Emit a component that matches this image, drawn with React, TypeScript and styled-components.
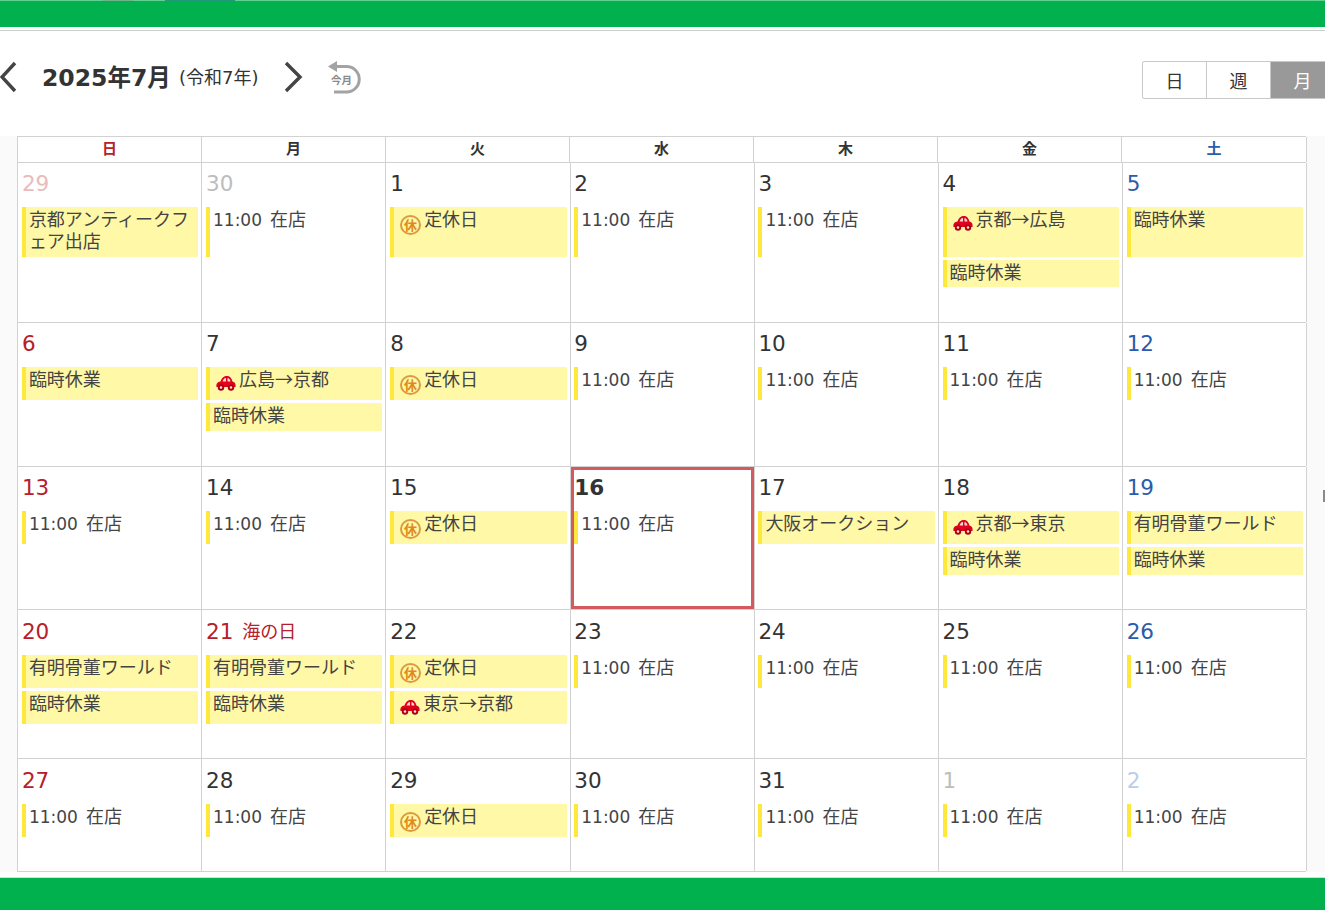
import React from "react";
import styled, { createGlobalStyle } from "styled-components";

type Tone = "normal" | "sun" | "sat" | "mutedSun" | "muted" | "mutedSat";
type Ev = { text: string; icon?: "car" | "off"; plain?: boolean; h?: number };
type Day = { d: number; tone?: Tone; today?: boolean; holiday?: string; events: Ev[] };

const zaiten: Ev = { text: "11:00 在店", plain: true, h: 33 };
const off = (h = 33): Ev => ({ text: "定休日", icon: "off", h });
const rinji = (h = 28): Ev => ({ text: "臨時休業", h });
const ariake: Ev = { text: "有明骨董ワールド", h: 33 };

const weeks: { height: number; pad: number; days: Day[] }[] = [
  {
    height: 160,
    pad: 6,
    days: [
      { d: 29, tone: "mutedSun", events: [{ text: "京都アンティークフェア出店", h: 50 }] },
      { d: 30, tone: "muted", events: [{ ...zaiten, h: 50 }] },
      { d: 1, events: [off(50)] },
      { d: 2, events: [{ ...zaiten, h: 50 }] },
      { d: 3, events: [{ ...zaiten, h: 50 }] },
      { d: 4, events: [{ text: "京都→広島", icon: "car", h: 50 }, rinji(27)] },
      { d: 5, tone: "sat", events: [{ text: "臨時休業", h: 50 }] },
    ],
  },
  {
    height: 144,
    pad: 6,
    days: [
      { d: 6, tone: "sun", events: [{ text: "臨時休業", h: 33 }] },
      { d: 7, events: [{ text: "広島→京都", icon: "car", h: 33 }, rinji()] },
      { d: 8, events: [off()] },
      { d: 9, events: [zaiten] },
      { d: 10, events: [zaiten] },
      { d: 11, events: [zaiten] },
      { d: 12, tone: "sat", events: [zaiten] },
    ],
  },
  {
    height: 143,
    pad: 6,
    days: [
      { d: 13, tone: "sun", events: [zaiten] },
      { d: 14, events: [zaiten] },
      { d: 15, events: [off()] },
      { d: 16, today: true, events: [zaiten] },
      { d: 17, events: [{ text: "大阪オークション", h: 33 }] },
      { d: 18, events: [{ text: "京都→東京", icon: "car", h: 33 }, rinji()] },
      { d: 19, tone: "sat", events: [ariake, rinji()] },
    ],
  },
  {
    height: 149,
    pad: 7,
    days: [
      { d: 20, tone: "sun", events: [ariake, rinji(33)] },
      { d: 21, tone: "sun", holiday: "海の日", events: [ariake, rinji(33)] },
      { d: 22, events: [off(), { text: "東京→京都", icon: "car", h: 33 }] },
      { d: 23, events: [zaiten] },
      { d: 24, events: [zaiten] },
      { d: 25, events: [zaiten] },
      { d: 26, tone: "sat", events: [zaiten] },
    ],
  },
  {
    height: 113,
    pad: 7,
    days: [
      { d: 27, tone: "sun", events: [zaiten] },
      { d: 28, events: [zaiten] },
      { d: 29, events: [off()] },
      { d: 30, events: [zaiten] },
      { d: 31, events: [zaiten] },
      { d: 1, tone: "muted", events: [zaiten] },
      { d: 2, tone: "mutedSat", events: [zaiten] },
    ],
  },
];

const toneColor: Record<Tone, string> = {
  normal: "#333333",
  sun: "#b5202a",
  sat: "#2a5caa",
  mutedSun: "#e8bcbc",
  muted: "#bdbdbd",
  mutedSat: "#bccde6",
};

const headers: { label: string; tone?: Tone }[] = [
  { label: "日", tone: "sun" },
  { label: "月" },
  { label: "火" },
  { label: "水" },
  { label: "木" },
  { label: "金" },
  { label: "土", tone: "sat" },
];

const Global = createGlobalStyle`
  html, body { margin: 0; padding: 0; background: #fff; overflow: hidden; }
  body { font-family: "DejaVu Sans", "Noto Sans CJK JP", sans-serif; color: #333; }
`;

const Page = styled.div`
  position: relative;
  width: 1325px;
  height: 910px;
  display: flex;
  flex-direction: column;
  overflow: hidden;
`;

const TopBar = styled.div`
  height: 27px;
  flex: none;
  background: #00b14d;
  border-top: 1px solid #5fd08f;
  box-sizing: border-box;
  display: flex;
  align-items: flex-start;
  padding-left: 103px;
`;

const ClippedNav = styled.span<{ $w: number; $c: string }>`
  width: ${(p) => p.$w}px;
  height: 1px;
  margin-top: -1px;
  margin-right: 32px;
  background: ${(p) => p.$c};
`;

const Toolbar = styled.header`
  height: 106px;
  margin-top: 3px;
  flex: none;
  box-sizing: border-box;
  border-top: 1px solid #c9d0cc;
  display: flex;
  align-items: flex-start;
  padding-top: 29px;
`;

const NavButton = styled.button`
  border: 0;
  background: none;
  padding: 0;
  width: 22px;
  height: 34px;
  display: flex;
  color: #444;
`;

const MonthTitle = styled.h1`
  margin: 1px 0 0 20px;
  font-size: 23.5px;
  line-height: 34px;
  font-weight: 700;
  color: #333;
  width: 129px;
  white-space: nowrap;
`;

const Era = styled.span`
  margin: 1px 0 0 8px;
  width: 103px;
  font-size: 18px;
  line-height: 34px;
  white-space: nowrap;
`;

const TodayIcon = styled.div`
  margin-left: 24px;
  width: 34px;
  height: 34px;
`;

const Views = styled.div`
  margin-left: auto;
  margin-top: 1px;
  margin-right: -9px;
  display: flex;
  height: 38px;
  box-sizing: border-box;
  border: 1px solid #c8c8c8;
  border-right: 0;
  border-radius: 3px 0 0 3px;
  overflow: hidden;
`;

const View = styled.div<{ $active?: boolean }>`
  width: 64px;
  box-sizing: border-box;
  display: flex;
  align-items: center;
  justify-content: center;
  font-size: 18px;
  font-family: "Noto Sans CJK JP", sans-serif;
  background: ${(p) => (p.$active ? "#999" : "#fff")};
  color: ${(p) => (p.$active ? "#fff" : "#333")};
  &:first-child { width: 63px; }
  & + & { border-left: 1px solid #c8c8c8; }
`;

const CalendarArea = styled.main`
  flex: none;
  height: 736px;
  padding-left: 17px;
  background: #fafafa;
`;

const Calendar = styled.div`
  width: 1290px;
  background: #fff;
  border-left: 1px solid #d2d2d2;
  border-right: 1px solid #fafafa;
  box-sizing: border-box;
`;

const HeadRow = styled.div`
  display: grid;
  grid-template-columns: repeat(6, 184px) 185px;
  height: 27px;
  box-sizing: border-box;
  border-top: 1px solid #d2d2d2;
  border-bottom: 1px solid #d2d2d2;
`;

const HeadCell = styled.div<{ $tone: Tone }>`
  display: flex;
  align-items: center;
  justify-content: center;
  box-sizing: border-box;
  padding: 0 0 4px;
  border-right: 1px solid #d2d2d2;
  font-size: 15px;
  font-weight: 700;
  font-family: "Noto Sans CJK JP", sans-serif;
  color: ${(p) => toneColor[p.$tone]};
`;

const Week = styled.div<{ $h: number }>`
  display: grid;
  grid-template-columns: repeat(7, 184.14px);
  height: ${(p) => p.$h}px;
  box-sizing: border-box;
  margin-left: 0.2px;
  border-bottom: 1px solid #d2d2d2;
`;

const Cell = styled.div<{ $today?: boolean; $pad: number }>`
  position: relative;
  box-sizing: border-box;
  padding: ${(p) => p.$pad}px 3px 0 3.7px;
  border-right: 1px solid #d2d2d2;
  ${(p) =>
    p.$today &&
    `&::after {
      content: "";
      position: absolute;
      inset: 0;
      border: 3px solid #d35a5f;
    }`}
`;

const DateLine = styled.div`
  height: 38px;
  display: flex;
  align-items: flex-start;
`;

const DateNum = styled.span<{ $tone: Tone; $today?: boolean }>`
  font-size: 21.5px;
  line-height: 30px;
  font-family: "DejaVu Sans", sans-serif;
  font-weight: ${(p) => (p.$today ? 700 : 400)};
  color: ${(p) => toneColor[p.$tone]};
`;

const Holiday = styled.span`
  margin-left: 9px;
  font-size: 18px;
  line-height: 27px;
  font-family: "Noto Sans CJK JP", sans-serif;
  color: #b5202a;
`;

const EventBox = styled.div<{ $h: number; $plain?: boolean }>`
  height: ${(p) => p.$h}px;
  box-sizing: border-box;
  margin-bottom: 3px;
  padding: 0 3px;
  border-left: 4px solid #ffe83c;
  background: ${(p) => (p.$plain ? "transparent" : "#fff8a6")};
  font-size: 18px;
  line-height: 22px;
  font-family: "Noto Sans CJK JP", sans-serif;
  color: #444;
`;

const EventIcon = styled.svg`
  vertical-align: -5px;
  margin: 0 3px 0 3px;
`;

const Time = styled.span`
  font-family: "DejaVu Sans", sans-serif;
  font-size: 17px;
  margin-right: 4px;
`;

const Gap = styled.div`
  height: 5px;
  flex: none;
  background: #fff;
`;

const BottomBar = styled.footer`
  flex: 1;
  background: #00b14d;
  border-top: 1px solid #bfe9d0;
`;

const EdgeTab = styled.span`
  position: absolute;
  right: 0;
  top: 490px;
  width: 2px;
  height: 12px;
  background: #8a8a8a;
`;

const Chevron = ({ left }: { left?: boolean }) => (
  <svg width="22" height="34" viewBox="0 0 22 34" fill="none">
    <path
      d={left ? "M15 3 L2 17 L15 31" : "M4 3 L18 17 L4 31"}
      stroke="currentColor"
      strokeWidth="3.4"
    />
  </svg>
);

const Car = () => (
  <EventIcon width="20" height="16" viewBox="0 0 20 16">
    <path
      d="M0.5 12 C0 8.5 1.5 7 4.5 6.5 C6 2.5 8 1 11 1 C14 1 15.5 3 16.5 6.5 C19 7 20 9 19.5 12 Z"
      fill="#e0001b"
    />
    <path d="M6.5 6.5 C7.5 4 8.5 3 10 3 L10 6.5 Z M11.5 3 C13 3 14 4.2 14.5 6.5 L11.5 6.5 Z" fill="#ffd8d8" />
    <circle cx="5" cy="12.5" r="3.2" fill="#b00014" />
    <circle cx="15" cy="12.5" r="3.2" fill="#b00014" />
    <circle cx="5" cy="12.5" r="1.2" fill="#ffe0e0" />
    <circle cx="15" cy="12.5" r="1.2" fill="#ffe0e0" />
  </EventIcon>
);

const OffMark = styled.span`
  display: inline-flex;
  align-items: center;
  justify-content: center;
  width: 21px;
  height: 20px;
  box-sizing: border-box;
  border: 2px solid #dd9a3c;
  border-radius: 50%;
  margin: 0 3px 0 3px;
  font-size: 13px;
  line-height: 1;
  font-weight: 700;
  color: #e08a1a;
  vertical-align: -4px;
`;

const EventLabel = ({ ev }: { ev: Ev }) => {
  if (ev.plain) {
    const [time, place] = ev.text.split(" ");
    return (
      <>
        <Time>{time}</Time> {place}
      </>
    );
  }
  return (
    <>
      {ev.icon === "off" && <OffMark>休</OffMark>}
      {ev.icon === "car" && <Car />}
      {ev.text}
    </>
  );
};

export default function App() {
  return (
    <Page>
      <Global />
      <TopBar>
        <ClippedNav $w={30} $c="#6fb38c" />
        <ClippedNav $w={70} $c="#1f9a78" />
      </TopBar>
      <Toolbar>
        <NavButton aria-label="前月">
          <Chevron left />
        </NavButton>
        <MonthTitle>2025年7月</MonthTitle>
        <Era>(令和7年)</Era>
        <NavButton aria-label="翌月">
          <Chevron />
        </NavButton>
        <TodayIcon>
          <svg width="34" height="34" viewBox="0 0 34 34" fill="none">
            <path
              d="M5 6.5 H18.5 A12.75 12.75 0 0 1 18.5 32 H6"
              stroke="#a3a3a3"
              strokeWidth="3"
            />
            <path d="M0 6.5 L9 1 V12 Z" fill="#a3a3a3" />
            <text x="3" y="24" fontSize="10.5" fill="#8a8a8a" fontWeight="700" fontFamily="Noto Sans CJK JP">
              今月
            </text>
          </svg>
        </TodayIcon>
        <Views>
          <View>日</View>
          <View>週</View>
          <View $active>月</View>
        </Views>
      </Toolbar>
      <CalendarArea>
        <Calendar>
          <HeadRow>
            {headers.map((h) => (
              <HeadCell key={h.label} $tone={h.tone ?? "normal"}>
                {h.label}
              </HeadCell>
            ))}
          </HeadRow>
          {weeks.map((w, i) => (
            <Week key={i} $h={w.height}>
              {w.days.map((day, j) => (
                <Cell key={j} $today={day.today} $pad={w.pad}>
                  <DateLine>
                    <DateNum $tone={day.tone ?? "normal"} $today={day.today}>
                      {day.d}
                    </DateNum>
                    {day.holiday && <Holiday>{day.holiday}</Holiday>}
                  </DateLine>
                  {day.events.map((ev, k) => (
                    <EventBox key={k} $h={ev.h ?? 33} $plain={ev.plain}>
                      <EventLabel ev={ev} />
                    </EventBox>
                  ))}
                </Cell>
              ))}
            </Week>
          ))}
        </Calendar>
      </CalendarArea>
      <Gap />
      <BottomBar />
      <EdgeTab />
    </Page>
  );
}
